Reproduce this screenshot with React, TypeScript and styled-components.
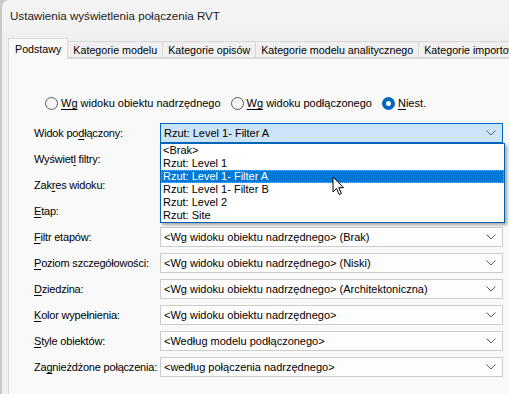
import React from 'react';
import styled, { createGlobalStyle } from 'styled-components';

const GlobalStyle = createGlobalStyle`
  html, body {
    margin: 0;
    padding: 0;
    width: 509px;
    height: 394px;
    overflow: hidden;
    background: #c9c9c9;
  }
  body {
    font-family: "Liberation Sans", Arial, sans-serif;
    font-size: 11px;
    color: #000;
  }
`;

const Window = styled.div`
  margin-left: 2px;
  width: 620px;
  height: 394px;
  background: #f0f0f0;
  border-top-left-radius: 8px;
  overflow: hidden;
  position: relative;
`;

const TitleBar = styled.div`
  height: 30px;
  display: flex;
  align-items: center;
  padding-left: 8px;
  background: #f3f3f3;
  font-size: 11.6px;
  color: #1a1a1a;
`;

const Body = styled.div`
  padding: 8px 0 0 6px;
`;

const TabStrip = styled.div`
  display: flex;
  align-items: flex-end;
  height: 20px;
  position: relative;
  z-index: 1;
`;

const Tab = styled.div<{ $active?: boolean }>`
  box-sizing: border-box;
  height: ${p => (p.$active ? '21px' : '17px')};
  padding: 0 ${p => (p.$active ? '6px' : '5px')};
  display: flex;
  align-items: center;
  white-space: nowrap;
  font-size: 10.7px;
  background: ${p => (p.$active ? '#f9f9f9' : '#f0f0f0')};
  border: 1px solid #d9d9d9;
  border-bottom: ${p => (p.$active ? 'none' : '1px solid #d9d9d9')};
  margin-left: ${p => (p.$active ? '0' : '-1px')};
  margin-bottom: ${p => (p.$active ? '-1px' : '0')};
  padding-top: ${p => (p.$active ? '0' : '1px')};
  color: #000;
`;

const Panel = styled.div`
  background: #f9f9f9;
  border: 1px solid #d9d9d9;
  height: 360px;
  padding: 37px 0 0 25px;
  box-sizing: border-box;
`;

const RadioRow = styled.div`
  display: flex;
  align-items: center;
  height: 14px;
  margin-left: 11px;
`;

const RadioItem = styled.label`
  display: flex;
  align-items: center;
  gap: 3px;
  margin-right: 10px;
  white-space: nowrap;
`;

const RadioCircle = styled.span<{ $checked?: boolean }>`
  box-sizing: border-box;
  width: 13px;
  height: 13px;
  border-radius: 50%;
  border: ${p => (p.$checked ? '4px solid #0067c0' : '1px solid #5c5c5c')};
  background: ${p => (p.$checked ? '#ffffff' : '#f5f5f5')};
`;

const Key = styled.span`
  text-decoration: underline;
  text-underline-offset: 2px;
`;

const Form = styled.div`
  display: grid;
  grid-template-columns: 126px 343px;
  grid-auto-rows: 20px;
  row-gap: 6px;
  margin-top: 13px;
`;

const Label = styled.div`
  line-height: 20px;
  white-space: nowrap;
  letter-spacing: -0.2px;
  color: #000;
`;

const ComboWrap = styled.div`
  position: relative;
`;

const Combo = styled.div<{ $open?: boolean }>`
  box-sizing: border-box;
  height: 20px;
  display: flex;
  align-items: center;
  justify-content: space-between;
  padding: 0 6px 0 3px;
  background: ${p => (p.$open ? '#cce4f7' : '#fdfdfd')};
  border: 1px solid ${p => (p.$open ? '#0067c0' : '#cccccc')};
  white-space: nowrap;
`;

const Chevron = styled.svg`
  flex: none;
`;

const List = styled.div`
  position: absolute;
  top: 20px;
  left: 0;
  width: 345px;
  box-sizing: border-box;
  background: #ffffff;
  border: 1px solid #0063b1;
  padding: 0;
  box-shadow: 2px 2px 3px rgba(0, 0, 0, 0.35);
  z-index: 5;
`;

const Item = styled.div<{ $selected?: boolean }>`
  box-sizing: border-box;
  height: 13px;
  line-height: 12px;
  padding-left: 2px;
  white-space: nowrap;
  background: ${p => (p.$selected ? '#0078d7' : 'transparent')};
  color: ${p => (p.$selected ? '#ffffff' : '#000')};
  outline: ${p => (p.$selected ? '1px dotted #f0a040' : 'none')};
  outline-offset: -1px;
`;

const Cursor = styled.svg`
  position: absolute;
  left: 330px;
  top: 176px;
  z-index: 10;
`;

const ChevronIcon = () => (
  <Chevron width="10" height="6" viewBox="0 0 10 6">
    <path d="M0.5 0.5 L5 5 L9.5 0.5" fill="none" stroke="#5f5f5f" strokeWidth="1" />
  </Chevron>
);

const options = [
  '<Brak>',
  'Rzut: Level 1',
  'Rzut: Level 1- Filter A',
  'Rzut: Level 1- Filter B',
  'Rzut: Level 2',
  'Rzut: Site',
];

const rows: { label: React.ReactNode; value: string }[] = [
  { label: <>Wyświet<Key>l</Key> filtry:</>, value: '' },
  { label: <>Zak<Key>r</Key>es widoku:</>, value: '' },
  { label: <><Key>E</Key>tap:</>, value: '' },
  { label: <><Key>F</Key>iltr etapów:</>, value: '<Wg widoku obiektu nadrzędnego> (Brak)' },
  { label: <><Key>P</Key>oziom szczegółowości:</>, value: '<Wg widoku obiektu nadrzędnego> (Niski)' },
  { label: <><Key>D</Key>ziedzina:</>, value: '<Wg widoku obiektu nadrzędnego> (Architektoniczna)' },
  { label: <><Key>K</Key>olor wypełnienia:</>, value: '<Wg widoku obiektu nadrzędnego>' },
  { label: <><Key>S</Key>tyle obiektów:</>, value: '<Według modelu podłączonego>' },
  { label: <>Za<Key>g</Key>nieżdżone połączenia:</>, value: '<według połączenia nadrzędnego>' },
];

const tabs = ['Podstawy', 'Kategorie modelu', 'Kategorie opisów', 'Kategorie modelu analitycznego', 'Kategorie importowanych'];

const App = () => {
  return (
    <>
      <GlobalStyle />
      <Window>
        <TitleBar>Ustawienia wyświetlenia połączenia RVT</TitleBar>
        <Body>
          <TabStrip>
            {tabs.map((t, i) => (
              <Tab key={t} $active={i === 0}>{t}</Tab>
            ))}
          </TabStrip>
          <Panel>
            <RadioRow>
              <RadioItem><RadioCircle /><span><Key>Wg</Key> widoku obiektu nadrzędnego</span></RadioItem>
              <RadioItem><RadioCircle /><span><Key>Wg</Key> widoku podłączonego</span></RadioItem>
              <RadioItem><RadioCircle $checked /><span><Key>N</Key>iest.</span></RadioItem>
            </RadioRow>
            <Form>
              <Label>Widok po<Key>d</Key>łączony:</Label>
              <ComboWrap>
                <Combo $open>
                  <span>Rzut: Level 1- Filter A</span>
                  <ChevronIcon />
                </Combo>
                <List>
                  {options.map(o => (
                    <Item key={o} $selected={o === 'Rzut: Level 1- Filter A'}>{o}</Item>
                  ))}
                </List>
              </ComboWrap>
              {rows.map((r, i) => (
                <React.Fragment key={i}>
                  <Label>{r.label}</Label>
                  <ComboWrap>
                    <Combo>
                      <span>{r.value}</span>
                      <ChevronIcon />
                    </Combo>
                  </ComboWrap>
                </React.Fragment>
              ))}
            </Form>
          </Panel>
        </Body>
        <Cursor width="13" height="20" viewBox="0 0 13 20">
          <path d="M1 1 L1 16 L4.5 12.5 L7.2 18.5 L9.4 17.5 L6.8 11.7 L11.5 11.7 Z" fill="#ffffff" stroke="#000" strokeWidth="1" strokeLinejoin="round" />
        </Cursor>
      </Window>
    </>
  );
};

export default App;
